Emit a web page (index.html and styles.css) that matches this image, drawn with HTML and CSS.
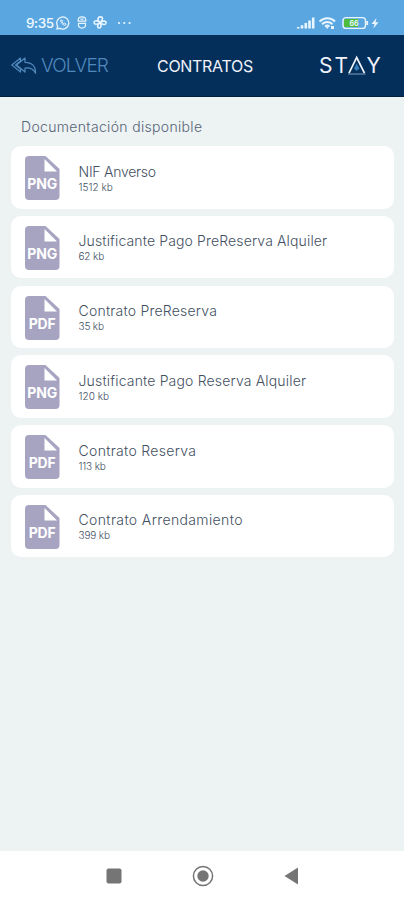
FILE: index.html
```html
<!DOCTYPE html>
<html lang="es">
<head>
<meta charset="utf-8">
<meta name="viewport" content="width=device-width">
<title>Contratos</title>
<link rel="stylesheet" href="styles.css">
</head>
<body>
<svg class="defs" width="0" height="0">
  <symbol id="file" viewBox="0 0 35 44">
    <path fill="#a7a4c2" d="M4 0H20.500L34.500 13V40a4 4 0 0 1-4 4H4a4 4 0 0 1-4-4V4a4 4 0 0 1 4-4z"/>
    <path fill="#fff" d="M19.500 3V15.500H32z"/>
  </symbol>
</svg>
<div class="status">
  <span class="time">9:35</span>
  <svg class="whatsapp" width="14" height="14" viewBox="0 0 14 14" fill="none" stroke="#e9f5ff" stroke-width="1.300"><path d="M1 13l.6-3A6 6 0 1 1 4 12.300z"/><path d="M4.700 4.200c-.5 2 2.500 5.500 4.800 5l.5-1.200-1.500-.8-.8.700-1.600-1.700.6-.8-.7-1.400z" stroke-width="1"/></svg>
  <svg class="mouse" width="10" height="13" viewBox="0 0 10 13" fill="none" stroke="#e9f5ff" stroke-width="1.200"><path d="M1.200 5.200C1 2.500 2 .8 5 .8s4 1.700 3.800 4.400zM1.500 7.400C1 10.500 2.400 12.200 5 12.200s4-1.700 3.500-4.800zM3.500 3.200h3"/></svg>
  <svg class="fan" width="14" height="13" viewBox="0 0 14 13" fill="none" stroke="#e9f5ff" stroke-width="1.600"><path d="M7 6.500C3.500 4 5 .8 7.500.9S10.500 4 7 6.500C10.800 4.200 13.300 5 13 7S10 9.300 7 6.500C9 10 7.800 12.200 6 12S4 9 7 6.500C4 9 1 8.500 1 6.500S4 4 7 6.500z"/></svg>
  <svg class="dots" width="15" height="4" viewBox="0 0 15 4" fill="#e9f5ff"><circle cx="2" cy="2" r="1.100"/><circle cx="7.300" cy="2" r="1.100"/><circle cx="12.600" cy="2" r="1.100"/></svg>
  <svg class="system" width="84" height="14" viewBox="0 0 84 14" fill="none" stroke="#e9f5ff">
    <path stroke-width="2.600" d="M2.200 12.500V11M6 12.500V9.200M9.800 12.500V7M13.500 12.500V4.500M17.200 12.500V1.500"/>
    <path stroke-width="2" d="M23.500 5.500c4.500-4.300 11.500-4.300 15.500 0M26 8.200c3-2.800 7.500-2.800 10.500 0M29 10.600c1.200-1.200 3.200-1.200 4.500 0"/>
    <path fill="#e9f5ff" stroke="none" d="M29.500 10.500h3.500l-1.800 2.500zM35 10h3v3h-3z"/>
    <rect x="47" y="1.600" width="22.500" height="10.800" rx="3" stroke-width="1.400"/>
    <path fill="#4fbd3a" stroke="none" d="M49.500 3H62v8H49.500a1.500 1.500 0 0 1-1.500-1.500v-5A1.500 1.500 0 0 1 49.500 3z"/>
    <path stroke-width="1.800" d="M71.200 5v4"/>
    <text x="53.500" y="9.800" class="level">66</text>
    <path fill="#e9f5ff" stroke="none" d="M80.500 2l-5 6h3l-1.200 4.500L82.500 6.300h-3z"/>
  </svg>
</div>
<header class="header">
  <a class="back">
    <svg width="26" height="18" viewBox="0 0 26 18" fill="none" stroke="#5289bd" stroke-width="1.200" stroke-linejoin="round"><path d="M9.500 1L.8 8l8.700 7v-3L4.500 8l5-4zM14 1L5.500 8l8.500 7v-4c5-.5 8.500.8 10.500 5.300.5-7-3.500-11-10.500-11z"/></svg>
    <span>VOLVER</span>
  </a>
  <h1 class="title">CONTRATOS</h1>
  <svg class="logo" width="66" height="32" viewBox="0 -5 66 32">
    <text x="0" y="18.300">S</text><text x="15.500" y="18.300">T</text><text x="47.500" y="18.300">Y</text>
    <path d="M30 18.200L37.700 2.500l7.800 15.700" fill="none" stroke="#f0f2fa" stroke-width="1.700"/>
    <path d="M29 19h17.500" stroke="#7f9fbe" stroke-width="1"/>
    <path d="M37.700 8.500l2.700 5-2.700 2.500-2.700-2.500z" fill="#347cba"/>
  </svg>
</header>
<main class="content">
  <h2 class="heading">Documentación disponible</h2>
  <ul class="list">
    <li class="card"><svg class="icon" viewBox="0 0 35 44"><use href="#file"/><text x="17.200" y="33" textLength="30">PNG</text></svg><div><p class="name n1">NIF Anverso</p><p class="size wide">1512 kb</p></div></li>
    <li class="card"><svg class="icon" viewBox="0 0 35 44"><use href="#file"/><text x="17.200" y="33" textLength="30">PNG</text></svg><div><p class="name n2">Justificante Pago PreReserva Alquiler</p><p class="size">62 kb</p></div></li>
    <li class="card"><svg class="icon" viewBox="0 0 35 44"><use href="#file"/><text x="17.200" y="33" textLength="27">PDF</text></svg><div><p class="name n3">Contrato PreReserva</p><p class="size">35 kb</p></div></li>
    <li class="card"><svg class="icon" viewBox="0 0 35 44"><use href="#file"/><text x="17.200" y="33" textLength="30">PNG</text></svg><div><p class="name n4">Justificante Pago Reserva Alquiler</p><p class="size wide">120 kb</p></div></li>
    <li class="card"><svg class="icon" viewBox="0 0 35 44"><use href="#file"/><text x="17.200" y="33" textLength="27">PDF</text></svg><div><p class="name n5">Contrato Reserva</p><p class="size">113 kb</p></div></li>
    <li class="card"><svg class="icon" viewBox="0 0 35 44"><use href="#file"/><text x="17.200" y="33" textLength="27">PDF</text></svg><div><p class="name n6">Contrato Arrendamiento</p><p class="size">399 kb</p></div></li>
  </ul>
</main>
<nav class="nav">
  <svg width="16" height="16" viewBox="0 0 16 16"><rect x=".5" y=".5" width="15" height="15" rx="2" fill="#757575"/></svg>
  <svg width="22" height="22" viewBox="0 0 22 22"><circle cx="11" cy="11" r="9.600" fill="none" stroke="#757575" stroke-width="1.500"/><circle cx="11" cy="11" r="5.700" fill="#757575"/></svg>
  <svg width="16" height="18" viewBox="0 0 16 18"><path d="M14 .5v17L.5 9z" fill="#757575"/></svg>
</nav>
</body>
</html>
```
FILE: styles.css
```css
* { box-sizing: border-box; margin: 0; padding: 0; }
body {
  display: flex;
  flex-direction: column;
  width: 404px;
  height: 900px;
  overflow: hidden;
  background: #edf2f3;
  font-family: Inter, "Liberation Sans", sans-serif;
}
svg { display: block; flex: none; }
.defs { position: absolute; }
.status {
  display: flex;
  align-items: center;
  height: 35px;
  padding: 10px 24px 0 26px;
  background: #5aa6e0;
}
.time { width: 30px; font-size: 13.500px; font-weight: 500; letter-spacing: -.45px; color: #f1f9ff; }
.mouse { margin-left: 7px; }
.fan { margin-left: 6px; }
.dots { margin-left: 10px; }
.system { margin-left: auto; }
.level { font-size: 7px; font-weight: 700; fill: #e9f5ff; stroke: none; }
.header {
  display: grid;
  grid-template-columns: 146px 1fr 74px;
  align-items: center;
  height: 62px;
  padding: 0 11px;
  background: #032f5a;
  border-bottom: 1px solid #02203f;
}
.back {
  display: flex;
  align-items: center;
  gap: 4px;
  color: #5289bd;
  font-size: 19px;
  font-weight: 300;
  letter-spacing: -.85px;
}
.title { font-size: 16px; font-weight: 400; letter-spacing: -.3px; color: #f0f2fa; }
.logo text { font-size: 21px; font-weight: 400; fill: #f0f2fa; }
.content { flex: 1; padding: 21px 10px 0 11px; }
.heading {
  padding-left: 10px;
  height: 28px;
  line-height: 18px;
  font-size: 14px;
  font-weight: 300;
  letter-spacing: .33px;
  color: #566477;
}
.list { display: grid; gap: 7.250px; list-style: none; }
.card {
  display: grid;
  grid-template-columns: 54px 1fr;
  height: 62.500px;
  padding: 10px 13.500px;
  background: #fff;
  border-radius: 10px;
}
.icon { width: 35px; height: 44px; }
.icon text { font-size: 14px; font-weight: 700; fill: #fff; text-anchor: middle; }
.name { margin-top: 6.500px; line-height: 18px; font-size: 14px; font-weight: 300; color: #43505f; white-space: nowrap; }
.n1 { letter-spacing: -.25px; }
.n2 { letter-spacing: .14px; }
.n3 { letter-spacing: .22px; }
.n4 { letter-spacing: .17px; }
.n5 { letter-spacing: .32px; }
.n6 { letter-spacing: .38px; }
.size { line-height: 12px; font-size: 10px; font-weight: 300; letter-spacing: -.15px; color: #43505f; }
.wide { letter-spacing: .05px; }
.nav {
  display: flex;
  align-items: center;
  justify-content: space-between;
  height: 49px;
  padding: 0 104px 0 106px;
  background: #fff;
}
```
